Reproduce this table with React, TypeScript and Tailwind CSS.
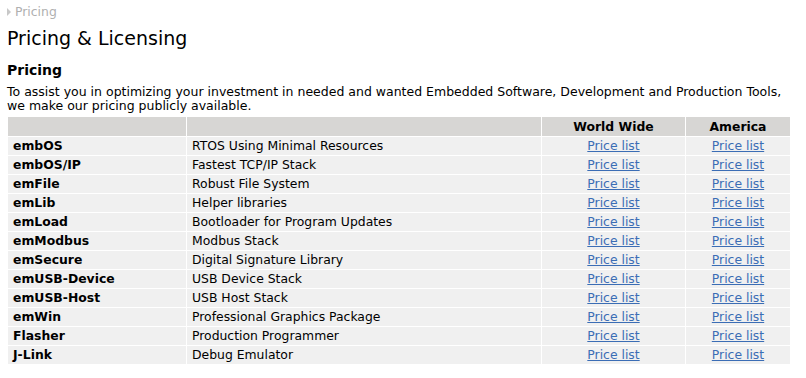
import React from "react";

const rows: [string, string][] = [
  ["embOS", "RTOS Using Minimal Resources"],
  ["embOS/IP", "Fastest TCP/IP Stack"],
  ["emFile", "Robust File System"],
  ["emLib", "Helper libraries"],
  ["emLoad", "Bootloader for Program Updates"],
  ["emModbus", "Modbus Stack"],
  ["emSecure", "Digital Signature Library"],
  ["emUSB-Device", "USB Device Stack"],
  ["emUSB-Host", "USB Host Stack"],
  ["emWin", "Professional Graphics Package"],
  ["Flasher", "Production Programmer"],
  ["J-Link", "Debug Emulator"],
];

export default function App() {
  return (
    <div className="w-[806px] h-[378px] bg-white text-black overflow-hidden" style={{ fontFamily: '"DejaVu Sans", Verdana, sans-serif' }}>
      <div className="pl-[7px] pt-[4px]">
        <div className="flex items-center h-[16px] text-[12.4px] text-[#b0b0b0]">
          <span className="inline-block w-0 h-0 border-y-[4px] border-y-transparent border-l-[4px] border-l-[#c8c8c8] mr-[4px]" />
          <span>Pricing</span>
        </div>
        <h1 className="text-[19px] leading-[24px] mt-[6px] font-normal">Pricing &amp; Licensing</h1>
        <h2 className="text-[14px] leading-[18px] font-bold mt-[11px]">Pricing</h2>
        <p className="text-[12.5px] leading-[14px] mt-[6px] pr-[10px]">
          To assist you in optimizing your investment in needed and wanted Embedded Software, Development and Production Tools, we make our pricing publicly available.
        </p>
      </div>
      <table className="ml-[7px] mt-[3px] w-[784px] text-[12.4px] border-separate border-spacing-[1px]">
        <thead>
          <tr className="bg-[#d7d6d4] h-[19px]">
            <th className="w-[178px]"></th>
            <th className="w-[354px]"></th>
            <th className="w-[143px] text-center font-bold leading-[19px] p-0">World Wide</th>
            <th className="text-center font-bold leading-[19px] p-0">America</th>
          </tr>
        </thead>
        <tbody>
          {rows.map(([name, desc]) => (
            <tr key={name} className="bg-[#f0f0f0] h-[18px]">
              <td className="font-bold pl-[5px] leading-[18px] p-0">{name}</td>
              <td className="pl-[5px] leading-[18px] p-0">{desc}</td>
              <td className="text-center leading-[18px] p-0">
                <a href="#" className="text-[#3b6db5] underline">Price list</a>
              </td>
              <td className="text-center leading-[18px] p-0">
                <a href="#" className="text-[#3b6db5] underline">Price list</a>
              </td>
            </tr>
          ))}
        </tbody>
      </table>
    </div>
  );
}
